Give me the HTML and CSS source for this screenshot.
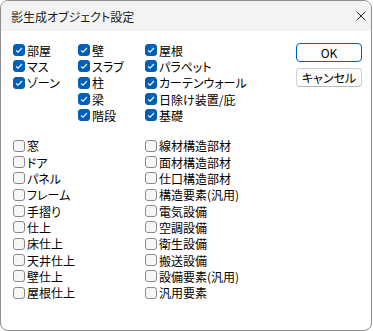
FILE: index.html
```html
<!DOCTYPE html>
<html lang="ja">
<head>
    <meta charset="UTF-8">
    <title>影生成オブジェクト設定</title>
    <link rel="stylesheet" href="styles.css">
</head>
<body>
    <div class="window">
        <div class="titlebar">
            <span class="title">影生成オブジェクト設定</span>
            <svg class="close" width="10" height="10" viewBox="0 0 10 10">
                <path d="M0.5 0.5 L9.5 9.5 M9.5 0.5 L0.5 9.5" stroke="#222" stroke-width="1" fill="none"/>
            </svg>
        </div>

        <!-- checked objects -->
        <div class="top">
            <div class="col col-a">
                <label class="item"><span class="box on"></span>部屋</label>
                <label class="item"><span class="box on"></span>マス</label>
                <label class="item"><span class="box on"></span>ゾーン</label>
            </div>
            <div class="col col-b">
                <label class="item"><span class="box on"></span>壁</label>
                <label class="item"><span class="box on"></span>スラブ</label>
                <label class="item"><span class="box on"></span>柱</label>
                <label class="item"><span class="box on"></span>梁</label>
                <label class="item"><span class="box on"></span>階段</label>
            </div>
            <div class="col col-c">
                <label class="item"><span class="box on"></span>屋根</label>
                <label class="item"><span class="box on"></span>パラペット</label>
                <label class="item"><span class="box on"></span>カーテンウォール</label>
                <label class="item"><span class="box on"></span>日除け装置/庇</label>
                <label class="item"><span class="box on"></span>基礎</label>
            </div>
            <div class="buttons">
                <button class="btn default">OK</button>
                <button class="btn">キャンセル</button>
            </div>
        </div>

        <!-- unchecked objects -->
        <div class="bottom">
            <div class="col col-wide">
                <label class="item"><span class="box"></span>窓</label>
                <label class="item"><span class="box"></span>ドア</label>
                <label class="item"><span class="box"></span>パネル</label>
                <label class="item"><span class="box"></span>フレーム</label>
                <label class="item"><span class="box"></span>手摺り</label>
                <label class="item"><span class="box"></span>仕上</label>
                <label class="item"><span class="box"></span>床仕上</label>
                <label class="item"><span class="box"></span>天井仕上</label>
                <label class="item"><span class="box"></span>壁仕上</label>
                <label class="item"><span class="box"></span>屋根仕上</label>
            </div>
            <div class="col">
                <label class="item"><span class="box"></span>線材構造部材</label>
                <label class="item"><span class="box"></span>面材構造部材</label>
                <label class="item"><span class="box"></span>仕口構造部材</label>
                <label class="item"><span class="box"></span>構造要素(汎用)</label>
                <label class="item"><span class="box"></span>電気設備</label>
                <label class="item"><span class="box"></span>空調設備</label>
                <label class="item"><span class="box"></span>衛生設備</label>
                <label class="item"><span class="box"></span>搬送設備</label>
                <label class="item"><span class="box"></span>設備要素(汎用)</label>
                <label class="item"><span class="box"></span>汎用要素</label>
            </div>
        </div>
    </div>
</body>
</html>
```

FILE: styles.css
```css
body {
    margin: 0;
    background-color: #fff;
    font-family: 'Noto Sans CJK JP', 'Noto Sans', sans-serif;
    font-size: 12px;
    color: #000;
}

.window {
    width: 372px;
    height: 331px;
    box-sizing: border-box;
    border: 1px solid #8e8e8e;
    border-radius: 8px;
    overflow: hidden;
    background-color: #fff;
}

.titlebar {
    height: 30px;
    background-color: #f3f3f3;
    display: flex;
    align-items: center;
    justify-content: space-between;
    padding: 0 4px 0 10px;
}

.title {
    font-feature-settings: "palt";
    color: #1a1a1a;
}

.close {
    margin-right: 1px;
}

.top {
    display: flex;
    padding: 11px 9px 0 12px;
}

.bottom {
    display: flex;
    margin-top: 14px;
    padding-left: 12px;
}

.col {
    display: flex;
    flex-direction: column;
}

.col-a {
    width: 65px;
}

.col-b {
    width: 67px;
}

.col-c {
    flex: 1;
}

.col-wide {
    width: 132px;
}

.item {
    display: flex;
    align-items: center;
    gap: 2px;
    height: 16.33px;
    white-space: nowrap;
    font-feature-settings: "palt";
}

.box {
    width: 12px;
    height: 12px;
    box-sizing: border-box;
    border: 1px solid #8a8a8a;
    border-radius: 3px;
    background-color: #f7f7f7;
    flex-shrink: 0;
}

.box.on {
    border-color: #005fb8;
    background-color: #005fb8;
    background-image: url("data:image/svg+xml,%3Csvg xmlns='http://www.w3.org/2000/svg' width='12' height='12' viewBox='0 0 12 12'%3E%3Cpath d='M3 6.3 L5 8.2 L9 4' stroke='white' stroke-width='1.1' fill='none'/%3E%3C/svg%3E");
    background-position: -1px -1px;
}

.buttons {
    display: flex;
    flex-direction: column;
    gap: 6px;
    margin-top: 1px;
}

.btn {
    width: 66px;
    height: 19px;
    padding: 0;
    font-family: inherit;
    font-size: 12px;
    font-feature-settings: "palt";
    color: #000;
    background-color: #fdfdfd;
    border: 1px solid #d0d0d0;
    border-bottom-color: #b8b8b8;
    border-radius: 4px;
    line-height: 1;
}

.btn.default {
    border: 1px solid #005fb8;
}
```
